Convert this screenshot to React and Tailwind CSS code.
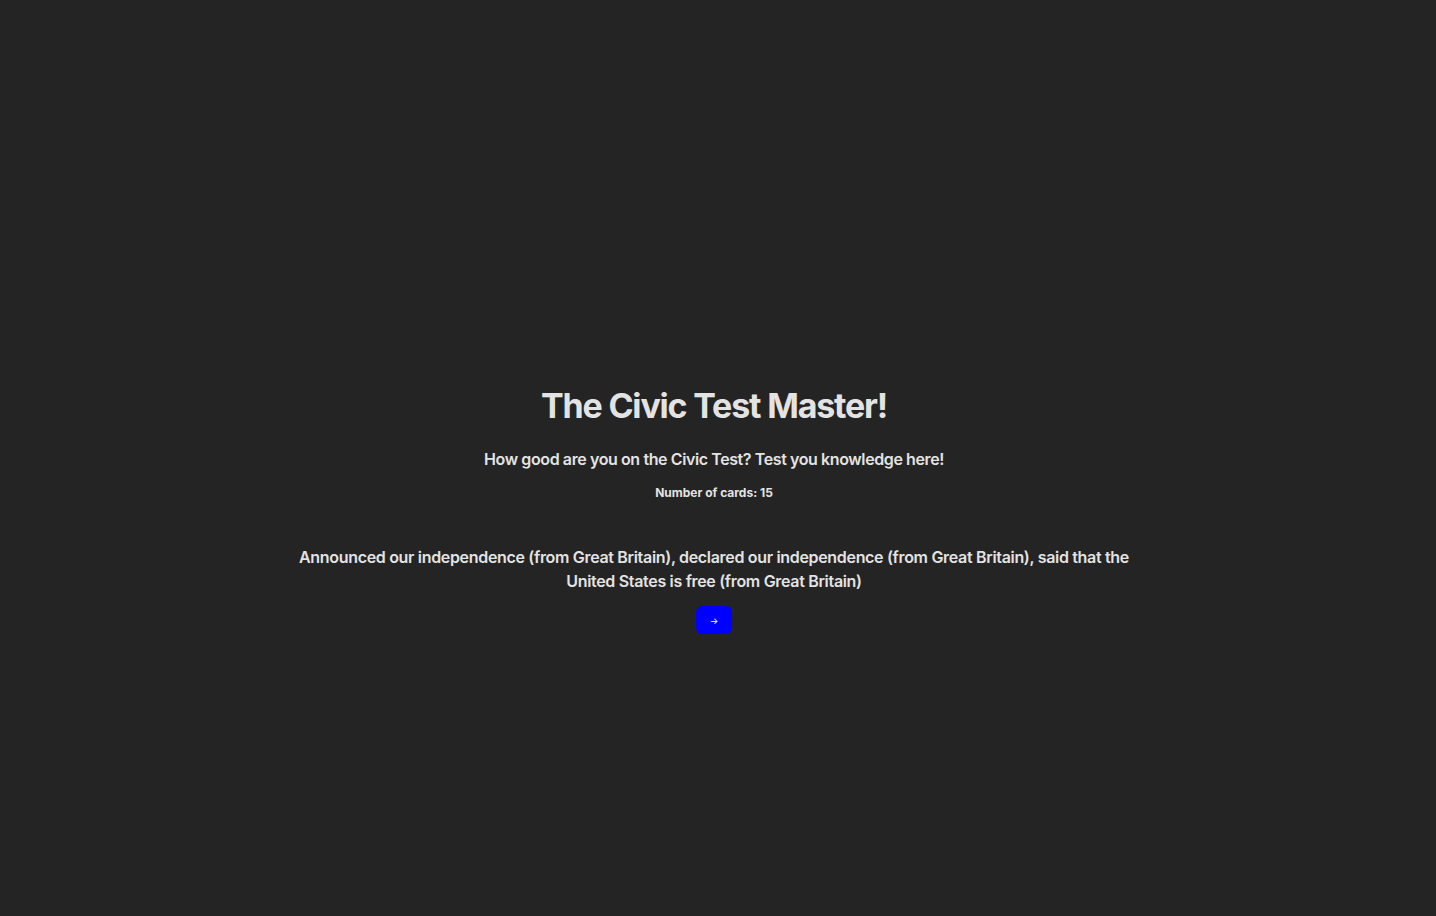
export default function App() {
  return (
    <div
      className="min-h-screen w-full bg-[#242424] text-[#e3e3e3] flex flex-col items-center pt-[386px] pr-[8px]"
      style={{ fontFamily: "Inter, 'Noto Sans', sans-serif" }}
    >
      <h1 className="text-[34px] leading-[40px] font-bold tracking-[-0.035em]">The Civic Test Master!</h1>
      <p className="mt-[21px] text-[16px] leading-[24px] font-semibold tracking-[-0.025em]">
        How good are you on the Civic Test? Test you knowledge here!
      </p>
      <p className="mt-[14px] text-[12px] leading-[16px] font-bold">Number of cards: 15</p>
      <p className="mt-[44px] w-[850px] text-center text-[16px] leading-[24px] font-semibold tracking-[-0.02em]">
        Announced our independence (from Great Britain), declared our independence (from Great Britain), said that the United States is free (from Great Britain)
      </p>
      <button className="mt-[13px] w-[36px] h-[28px] rounded-[6px] bg-[#0000ff] text-white text-[9px] leading-none flex items-center justify-center">
        →
      </button>
    </div>
  );
}
